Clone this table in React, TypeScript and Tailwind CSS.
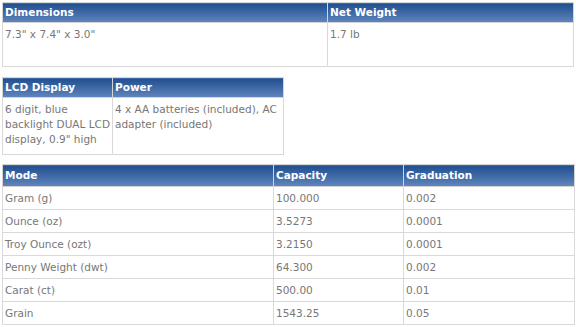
const th =
  "h-[20px] border border-[#d4d4d4] bg-gradient-to-b from-[#1f4e8f] to-[#6086bd] px-[2px] text-left align-middle font-bold text-white";
const td = "border border-[#d9d9d9] px-[2px] pt-[4px] pb-[2px] align-top text-[#777]";

const modes = [
  ["Gram (g)", "100.000", "0.002"],
  ["Ounce (oz)", "3.5273", "0.0001"],
  ["Troy Ounce (ozt)", "3.2150", "0.0001"],
  ["Penny Weight (dwt)", "64.300", "0.002"],
  ["Carat (ct)", "500.00", "0.01"],
  ["Grain", "1543.25", "0.05"],
];

export default function App() {
  return (
    <div className="h-[327px] w-[576px] bg-white px-[2px] pt-[2px] font-['DejaVu_Sans',Verdana,sans-serif] text-[10.5px] leading-[15px]">
      <table className="w-[572px] border-collapse">
        <tbody>
          <tr>
            <th className={`${th} w-[325px]`}>Dimensions</th>
            <th className={th}>Net Weight</th>
          </tr>
          <tr>
            <td className={`${td} h-[44px]`}>7.3" x 7.4" x 3.0"</td>
            <td className={td}>1.7 lb</td>
          </tr>
        </tbody>
      </table>

      <table className="mt-[10px] w-[282px] border-collapse">
        <tbody>
          <tr>
            <th className={`${th} w-[110px]`}>LCD Display</th>
            <th className={th}>Power</th>
          </tr>
          <tr>
            <td className={`${td} h-[57px]`}>6 digit, blue backlight DUAL LCD display, 0.9" high</td>
            <td className={td}>4 x AA batteries (included), AC adapter (included)</td>
          </tr>
        </tbody>
      </table>

      <table className="mt-[9px] w-[573px] border-collapse">
        <tbody>
          <tr>
            <th className={`${th} h-[22px] w-[271px]`}>Mode</th>
            <th className={`${th} w-[130px]`}>Capacity</th>
            <th className={th}>Graduation</th>
          </tr>
          {modes.map(([m, c, g]) => (
            <tr key={m}>
              <td className={`${td} h-[23px] py-0 align-middle`}>{m}</td>
              <td className={`${td} py-0 align-middle`}>{c}</td>
              <td className={`${td} py-0 align-middle`}>{g}</td>
            </tr>
          ))}
        </tbody>
      </table>
    </div>
  );
}
